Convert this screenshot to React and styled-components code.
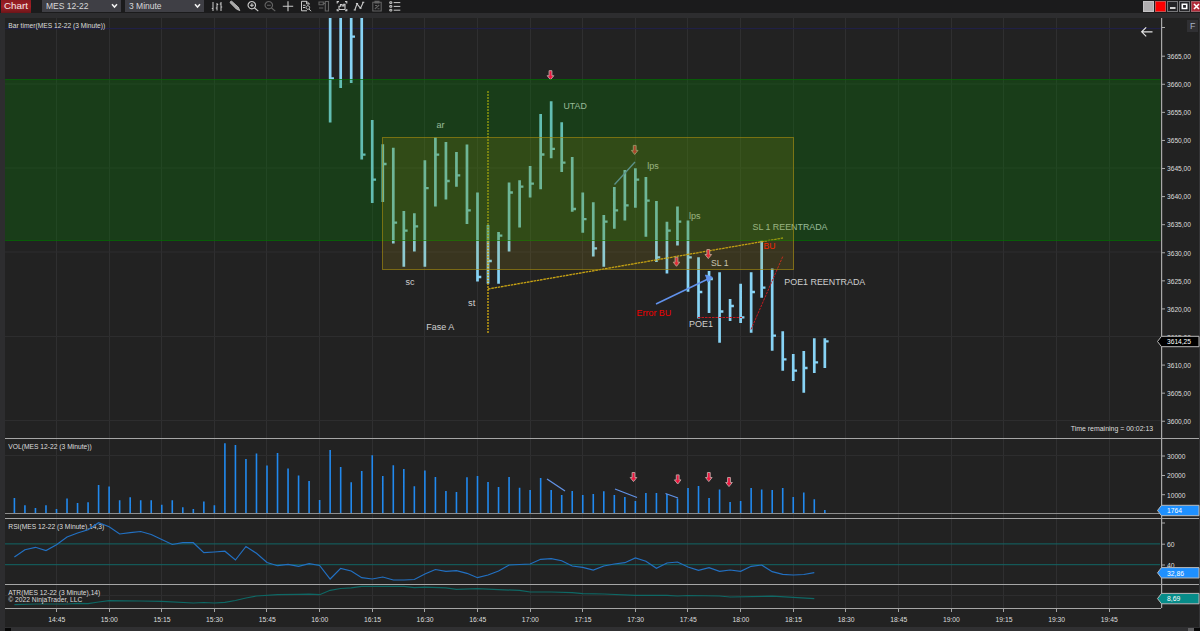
import React from 'react';
import styled, { createGlobalStyle } from 'styled-components';

const Global = createGlobalStyle`
  * { box-sizing: border-box; }
  body { margin: 0; background: #2d2d2f; overflow: hidden; }
  body, text { font-family: "Liberation Sans", Arial, sans-serif; }
`;

const Window = styled.div`
  width: 1200px;
  height: 631px;
  display: flex;
  flex-direction: column;
  background: #2d2d2f;
`;
const Toolbar = styled.header`
  height: 13px;
  display: flex;
  align-items: flex-start;
  background: #1b1b1c;
  overflow: hidden;
  flex: none;
`;
const ChartTab = styled.div`
  width: 30px;
  height: 13px;
  margin-left: 1px;
  background: linear-gradient(#8c1a20, #a02026 50%, #6c1519);
  color: #f3e9e9;
  font-size: 9.8px;
  line-height: 12px;
  text-align: center;
`;
const Select = styled.div`
  width: ${(p) => p.$width}px;
  height: 12px;
  margin-left: ${(p) => p.$gap}px;
  padding: 0 3px 0 4px;
  display: flex;
  align-items: center;
  justify-content: space-between;
  background: #3f3f45;
  color: #d8d8d8;
  font-size: 8.5px;
  line-height: 12px;
`;
const Tools = styled.div`
  display: flex;
  gap: 5.8px;
  margin-left: 7px;
`;
const ToolIcon = styled.svg`
  width: 12px;
  height: 12px;
  fill: none;
  stroke: ${(p) => (p.$dim ? '#636363' : '#cbcbcb')};
  stroke-width: 1.1;
`;
const WindowButtons = styled.div`
  display: flex;
  gap: 1px;
  margin: 1px 0 0 auto;
  width: 57px;
  flex: none;
`;
const WindowButton = styled.div`
  width: 11px;
  height: 11px;
  flex: none;
  display: flex;
  background: ${(p) => p.$color};
  border: 1px solid ${(p) => p.$edge || '#77777a'};
  svg { width: 9px; height: 9px; fill: none; stroke: #fff; stroke-width: 1.6; }
`;
const Frame = styled.main`
  margin: 5px 0 0 5px;
  display: flex;
  flex-direction: column;
  background: #222222;
  border-right: 1px solid #343436;
`;
const Pane = styled.section`
  display: grid;
  grid-template-columns: 1156px 38px;
  height: ${(p) => p.$height}px;
`;
const Canvas = styled.svg`
  display: block;
  width: ${(p) => p.$width}px;
  height: 100%;
`;
const AxisCanvas = styled(Canvas)`
  overflow: visible;
  position: relative;
`;
const ScrollTrack = styled.footer`
  height: 4px;
  margin-left: 5px;
  display: flex;
  align-items: flex-end;
  justify-content: space-between;
  background: #303032;
`;
const ScrollEnd = styled.div`
  width: ${(p) => p.$width}px;
  height: 3px;
  background: #060606;
  border-left: ${(p) => p.$grip}px solid #606062;
`;

const barX = (k) => 14.4 + 10.525 * k;

// index, high, low, close in chart pixels
const BARS = [
  [30, 18, 122.5, 78.3], [31, 18, 88, null], [32, 18, 83, 36.7], [33, 18, 159.5, 154.7],
  [34, 120, 203, 179.7], [35, 144.3, 202, 164], [36, 147.7, 243.5, 222.7], [37, 211, 266.7, 230.7],
  [38, 213.3, 251.5, 226.3], [39, 160.3, 266.7, 188.2], [40, 137.5, 206.5, 154.7], [41, 142, 199.5, 181],
  [42, 152, 186.8, 175.3], [43, 144.5, 224, 210.3], [44, 192.6, 281.5, 277], [45, 225, 283.7, 261],
  [46, 232, 283.7, 235.6], [47, 182.4, 251.5, 192.5], [48, 180.2, 227.5, 186.7], [49, 166, 197.5, 183.7],
  [50, 114, 189.3, 154.5], [51, 101.3, 158.2, 148.8], [52, 122.2, 172, 162.7], [53, 157, 211.7, 209],
  [54, 192.5, 232.8, 219.2], [55, 202.2, 256.5, 248.4], [56, 215, 266.7, 221.7], [57, 187, 228.7, 210.3],
  [58, 170, 220.5, 205.3], [59, 168.3, 207.7, 179.6], [60, 177, 236.7, 200.7], [61, 201, 262, 257.3],
  [62, 221.8, 273.5, 230.7], [63, 206.6, 245.5, 221.7], [64, 220.6, 291.7, 257.3], [65, 257.3, 318.5, 292],
  [66, 271, 313, 279], [67, 272.3, 342.7, 311.5], [68, 299, 321, 306], [69, 283.8, 323, 317.4],
  [70, 272.3, 332.7, 292], [71, 240.6, 297.7, 287.6], [72, 268.5, 350.8, 335.7], [73, 331.2, 370.7, 359.3],
  [74, 354, 381, 370.6], [75, 351, 392.8, 368], [76, 338.3, 373, 362.4], [77, 338.3, 368, 341.3],
];

const VOLUME = [498, 505.3, 508, 505.3, 509, 498.5, 503, 502.3, 485, 486.5, 500.3, 497.3, 500.3, 500.3, 504.7, 500.3,
  507.3, 509, 501.5, 505.3, 443.3, 445, 459, 453.5, 465.5, 453, 468.5, 475.5, 481, 500, 450, 467, 482.3, 471, 455.3,
  476, 465.3, 469, 486.3, 470.5, 477, 491, 492, 477.3, 476, 482, 487, 477, 487.7, 490, 478, 490, 495, 491, 495, 494,
  491.3, 495, 497, 501, 493, 493, 494, 498.5, 488, 486, 498, 489.5, 502, 501, 488, 489.5, 490, 488, 497, 492.5, 499.3, 510];

const RSI = [557, 549.7, 547.3, 550.5, 544.7, 537, 533, 529.7, 522.7, 526.7, 534, 532.7, 531.5, 534.5, 539.5, 544.5,
  542.7, 542.7, 552.7, 552, 551.2, 560, 546.5, 553.3, 562.5, 565.7, 564.3, 566.3, 563.7, 565.5, 579, 568.3, 571, 577.7,
  579, 577, 580, 580, 579.5, 574, 569.5, 571.3, 570.7, 573.3, 577.7, 575, 571, 565, 564.5, 564, 559.3, 558.7, 560.7,
  566, 567.3, 570, 566, 564, 562.7, 558, 561.3, 568.3, 563, 562, 567, 570.3, 567.7, 571.3, 570, 571.3, 566.3, 565,
  571.7, 574.3, 575, 574.5, 572.7];

const ATR = [[0, 604.7], [2, 604], [5, 604], [6, 603.4], [7, 603.7], [8, 602], [9, 600.7], [12, 601], [14, 601.3],
  [17, 603], [18, 602.5], [19, 603], [20, 602.3], [21, 600.5], [22, 598], [23, 596], [25, 594.7], [27, 594.3],
  [28, 594.2], [29, 594.7], [30, 590.3], [31, 588.5], [32, 587.8], [33, 586.4], [37, 586.4], [38, 587.7], [39, 587.2],
  [41, 587.8], [42, 589.3], [44, 588.7], [46, 589.7], [48, 590.3], [49, 592], [51, 592], [53, 592.6], [54, 593.7],
  [56, 594], [59, 595.4], [62, 595.4], [63, 596], [64, 595.5], [67, 596], [68, 597], [72, 596.2], [76, 598.6]];

const TIMES = ['14:45', '15:00', '15:15', '15:30', '15:45', '16:00', '16:15', '16:30', '16:45', '17:00', '17:15',
  '17:30', '17:45', '18:00', '18:15', '18:30', '18:45', '19:00', '19:15', '19:30', '19:45'];
const timeX = (i) => 56.4 + 52.63 * i;

const Label = ({ x, y, w, size = 7.7, color = '#dedede', children }) => (
  <text x={x} y={y} textLength={w} lengthAdjust="spacingAndGlyphs" fontSize={size} fill={color}>{children}</text>
);

const Note = ({ x, y, w, color = '#cfcfcf', children }) => (
  <Label x={x} y={y} w={w} size={9.6} color={color}>{children}</Label>
);

const VerticalGrid = ({ top, bottom }) => TIMES.map((t, i) => (
  <line key={t} x1={Math.floor(timeX(i)) + 0.5} x2={Math.floor(timeX(i)) + 0.5} y1={top} y2={bottom} stroke="#2f2f30" />
));

const HLine = ({ y, color = '#2d2d2e', x2 = 1161 }) => <line x1="5" x2={x2} y1={y} y2={y} stroke={color} />;

const DownArrow = ({ x, y }) => (
  <path
    transform={`translate(${x} ${y})`}
    d="M-1.4 -4.8h2.8v5h1.9L0 4.3L-3.3 .2h1.9z"
    fill="#ee1740" stroke="#bb9a9a" strokeWidth="1"
  />
);

const PlotPane = ({ top, height, children, axis }) => (
  <Pane $height={height}>
    <Canvas $width={1156} viewBox={`5 ${top} 1156 ${height}`}>{children}</Canvas>
    <AxisCanvas $width={38} viewBox={`1161 ${top} 38 ${height}`}>
      <line x1="1161.6" x2="1161.6" y1={top} y2={top + height} stroke="#a9a9a9" strokeWidth="1.2" />
      {axis}
    </AxisCanvas>
  </Pane>
);

const Tick = ({ y, w, children }) => (
  <>
    <line x1="1162" x2="1165" y1={y} y2={y} stroke="#a9a9a9" />
    {children && <Label x={1167} y={y + 2.8} w={w}>{children}</Label>}
  </>
);

const Tag = ({ y, w, fill, edge = '#b9b9b9', children }) => (
  <>
    <path d={`M1157.5 ${y}L1161.5 ${y - 5.2}H1199V${y + 5.2}H1161.5Z`} fill={fill} stroke={edge} />
    <Label x={1167} y={y + 2.8} w={w} color="#fff">{children}</Label>
  </>
);

function PricePane() {
  const path = BARS.map(([k, h, l]) => `M${barX(k)} ${h}V${l}`).join('');
  const closes = BARS.filter((b) => b[3] !== null).map(([k, , , c]) => `M${barX(k)} ${c}h3.8`).join('');
  return (
    <PlotPane
      top={18}
      height={420}
      axis={(
        <>
          <Tick y={27.5} />
          {Array.from({ length: 14 }, (_, i) => (
            <Tick key={i} y={56.2 + 28.08 * i} w={24}>{`${3665 - 5 * i},00`}</Tick>
          ))}
          <rect x="1187" y="20" width="11" height="12" fill="#303033" />
          <Label x={1190} y={29.4} w={5.4} size={9} color="#a9b3c4">F</Label>
          <Tag y={341.5} w={24} fill="#000">3614,25</Tag>
        </>
      )}
    >
      <VerticalGrid top={18} bottom={438} />
      {[84, 168, 252, 336.5, 420.5].map((y) => <HLine key={y} y={y} />)}
      <HLine y={28.6} color="#20204c" />
      <path d={path} stroke="#87d3f5" strokeWidth="2.7" fill="none" />
      <path d={closes} stroke="#87d3f5" strokeWidth="2.3" fill="none" />
      <g stroke="#c8a313" fill="none">
        <path d="M488 91V334" strokeWidth="1.4" strokeDasharray="2 1" />
        <path d="M488 289L783 238" strokeWidth="1.3" strokeDasharray="2.6 .7" />
      </g>
      <g stroke="#c41a20" fill="none" strokeDasharray="2.5 1">
        <path d="M698 317.5H742" />
        <path d="M751 329.5L783 256" />
      </g>
      <path d="M614.5 184.5L635 162" stroke="#6795df" strokeWidth="1.3" />
      <path d="M656 304L708 279" stroke="#6192ec" strokeWidth="1.5" />
      <path d="M705.5 275L712.3 277.2L708 282Z" fill="#6192ec" stroke="#6192ec" />
      <DownArrow x={550.5} y={75.5} />
      <DownArrow x={634.7} y={150.2} />
      <DownArrow x={676.5} y={262} />
      <DownArrow x={708.3} y={254.3} />
      <Note x={436.5} y={128} w={8}>ar</Note>
      <Note x={563.5} y={108.9} w={23.3}>UTAD</Note>
      <Note x={647.3} y={169.2} w={11.5}>lps</Note>
      <Note x={689} y={218.7} w={11.5}>lps</Note>
      <Note x={711} y={266.2} w={17.5}>SL 1</Note>
      <Note x={752.5} y={229.5} w={75}>SL 1 REENTRADA</Note>
      <Note x={763.5} y={249.3} w={12} color="#ff1500">BU</Note>
      <Note x={784.3} y={284.6} w={81}>POE1 REENTRADA</Note>
      <Note x={636.5} y={316.3} w={34.8} color="#f00000">Error BU</Note>
      <Note x={689} y={327.2} w={24}>POE1</Note>
      <Note x={405.5} y={284.6} w={9}>sc</Note>
      <Note x={468} y={305.8} w={7.3}>st</Note>
      <Note x={426.3} y={330.2} w={28}>Fase A</Note>
      <rect x="5" y="79" width="1155.5" height="162" fill="rgba(5,132,5,.28)" />
      <path d="M5 79.5H1160.5M5 240.5H1160.5" stroke="#006b00" strokeOpacity=".65" />
      <rect x="382.5" y="137.5" width="411" height="132" fill="rgba(178,152,18,.165)" stroke="#a58a10" strokeOpacity=".65" />
      <Label x={8.3} y={28} w={97}>Bar timer(MES 12-22 (3 Minute))</Label>
      <Label x={1070.7} y={431} w={82.5}>Time remaining = 00:02:13</Label>
      <path d="M1152.5 31.8H1142M1146.2 27.3L1141.7 31.8L1146.2 36.3" fill="none" stroke="#e4e4e4" strokeWidth="1.2" />
    </PlotPane>
  );
}

function VolumePane() {
  return (
    <PlotPane
      top={438}
      height={80}
      axis={(
        <>
          <path d="M1161 438.5H1199" stroke="#a6a6a6" />
          <Tick y={456} w={18.5}>30000</Tick>
          <Tick y={475.5} w={18.5}>20000</Tick>
          <Tick y={494.7} w={18.5}>10000</Tick>
          <Tag y={510.5} w={15} fill="#1e90ff">1764</Tag>
        </>
      )}
    >
      <VerticalGrid top={438} bottom={518} />
      <HLine y={455.5} />
      <HLine y={438.5} color="#a6a6a6" />
      <path d={VOLUME.map((y, k) => `M${barX(k)} ${y}V513`).join('')} stroke="#2189ee" strokeWidth="1.6" />
      <HLine y={513.5} color="#8d8d8d" />
      <path d="M547 479L565 491M615 489L637 497.5M665.5 493.5L678 498" stroke="#6192e6" strokeWidth="1.3" />
      <DownArrow x={633.5} y={477.3} />
      <DownArrow x={677.7} y={479.7} />
      <DownArrow x={708.8} y={477.3} />
      <DownArrow x={729} y={482.3} />
      <Label x={8.3} y={448.9} w={83.5}>VOL(MES 12-22 (3 Minute))</Label>
    </PlotPane>
  );
}

function RsiPane() {
  return (
    <PlotPane
      top={518}
      height={66}
      axis={(
        <>
          <path d="M1161 518.5H1199" stroke="#a6a6a6" />
          <Tick y={523} />
          <Tick y={544.2} w={7.6}>60</Tick>
          <Tick y={565} w={7.6}>40</Tick>
          <Tag y={572.8} w={17} fill="#1e90ff">32,86</Tag>
        </>
      )}
    >
      <VerticalGrid top={518} bottom={584} />
      <HLine y={518.5} color="#a6a6a6" />
      <HLine y={543.9} x2={1160} color="#126766" />
      <HLine y={564.7} x2={1160} color="#126766" />
      <Label x={8.3} y={528.7} w={96}>RSI(MES 12-22 (3 Minute),14,3)</Label>
      <polyline points={RSI.map((y, k) => `${barX(k)},${y}`).join(' ')} fill="none" stroke="#2270c2" strokeWidth="1.2" />
    </PlotPane>
  );
}

function AtrPane() {
  return (
    <PlotPane
      top={584}
      height={24}
      axis={(
        <>
          <path d="M1161 584.5H1199" stroke="#a6a6a6" />
          <Tag y={598.6} w={13.3} fill="#078c89">8,69</Tag>
        </>
      )}
    >
      <VerticalGrid top={584} bottom={608} />
      <HLine y={595.5} />
      <HLine y={584.5} color="#a6a6a6" />
      <polyline points={ATR.map(([k, y]) => `${barX(k)},${y}`).join(' ')} fill="none" stroke="#0e6865" strokeWidth="1.2" />
      <Label x={8.3} y={594.5} w={92}>ATR(MES 12-22 (3 Minute),14)</Label>
      <Label x={8.3} y={602.3} w={74}>© 2022 NinjaTrader, LLC</Label>
    </PlotPane>
  );
}

function TimeAxis() {
  return (
    <Pane $height={19}>
      <Canvas $width={1156} viewBox="5 608 1156 19">
        <HLine y={608.5} color="#a6a6a6" />
        {TIMES.map((t, i) => (
          <React.Fragment key={t}>
            <path d={`M${Math.floor(timeX(i)) + 0.5} 609v3`} stroke="#a6a6a6" />
            <Label x={timeX(i) - 8.2} y={622.4} w={17}>{t}</Label>
          </React.Fragment>
        ))}
      </Canvas>
    </Pane>
  );
}

const Chevron = () => (
  <svg width="7" height="6" viewBox="0 0 7 6"><path d="M1 1.2L3.5 4L6 1.2" fill="none" stroke="#f2f2f2" strokeWidth="1.5" /></svg>
);

const TOOLS = [
  [false, <path key="p" d="M2 2v9M.8 8.5h1.2M6 3v7.5M6 4.5h1.2M4.8 8h1.2M10 2v9M8.8 4h1.2M10 7h1.2" strokeWidth="1" />],
  [false, <path key="p" d="M1.5 1.5l1.2-.3L9.3 7.2l1.5 3.4l-3.4-1.5L1.2 2.8z" fill="#a9a9a9" strokeWidth=".8" />],
  [false, <path key="p" d="M7.6 8L11.3 11.2M4.8 1.5a3.7 3.7 0 1 0 .01 0M3 5.2h3.8M4.9 3.3v3.8" />],
  [true, <path key="p" d="M7.6 8L11.3 11.2M4.8 1.5a3.7 3.7 0 1 0 .01 0M3 5.2h3.8" />],
  [false, <path key="p" d="M.8 6.3h10.4M6 1.3v10" />],
  [false, <path key="p" d="M9.2 4.5V3.7L6.8 1.3H1.5v9.5H7M6.6 1.3v2.6h2.6M3 5.3h2.5M3 7.5h2M7.8 5.7a1.8 1.8 0 1 0 .01 0M9 9l2 2.2" strokeWidth="1" />],
  [true, <path key="p" d="M1 2h4.3v2.8H1zM1 8h4.3M5.3 3.4h2M7.3 1.5h3.2v9.5H7.3z" />],
  [false, <path key="p" d="M1.2 3.4V1.6H3M9 1.6h1.8v1.8M10.8 9v1.8H9M3 10.8H1.2V9M3 9.5V6.3h1.5V4.5h1.6V6h1.6V4.2h1.3v5.3z" />],
  [false, <path key="p" d="M1.8 10L4 3.8L7.5 8.3L10.2 2.4M.7 10h2.2M2.9 3.5h2.2M6.4 8.3h2.2M9.1 2.3h2.2" />],
  [true, <path key="p" d="M1.8 2.2h8.4v8.8H1.8zM4 1.2h4v1.8H4zM3.8 9l4.4-4M4 5.5h2M6.5 8.7h2" />],
  [false, <path key="p" d="M.8 1.8h2v1.6h-2zM.8 5.6h2v1.6h-2zM.8 9.4h2V11h-2zM4.7 2.6h6.6M4.7 6.4h6.6M4.7 10.2h6.6" strokeWidth="1" />],
];

export default function App() {
  return (
    <Window>
      <Global />
      <Toolbar>
        <ChartTab>Chart</ChartTab>
        <Select $width={79} $gap={11}>MES 12-22<Chevron /></Select>
        <Select $width={79} $gap={4}>3 Minute<Chevron /></Select>
        <Tools>
          {TOOLS.map(([dim, glyph], i) => <ToolIcon key={i} viewBox="0 0 12 12" $dim={dim}>{glyph}</ToolIcon>)}
        </Tools>
        <WindowButtons>
          <WindowButton $color="#b0aeb0" $edge="#c4c2c4" />
          <WindowButton $color="#fb0000" $edge="#c85050" />
          <WindowButton $color="#242427"><svg viewBox="0 0 9 9"><path d="M2 6h5.5" /></svg></WindowButton>
          <WindowButton $color="#242427"><svg viewBox="0 0 9 9"><path d="M2.3 2.3h4.4v4.2H2.3z" /></svg></WindowButton>
          <WindowButton $color="#b02b3a" $edge="#a06068"><svg viewBox="0 0 9 9"><path d="M2 2l5 5M7 2L2 7" /></svg></WindowButton>
        </WindowButtons>
      </Toolbar>
      <Frame>
        <PricePane />
        <VolumePane />
        <RsiPane />
        <AtrPane />
        <TimeAxis />
      </Frame>
      <ScrollTrack>
        <ScrollEnd $width={6} $grip={0} />
        <ScrollEnd $width={12} $grip={6} />
      </ScrollTrack>
    </Window>
  );
}
